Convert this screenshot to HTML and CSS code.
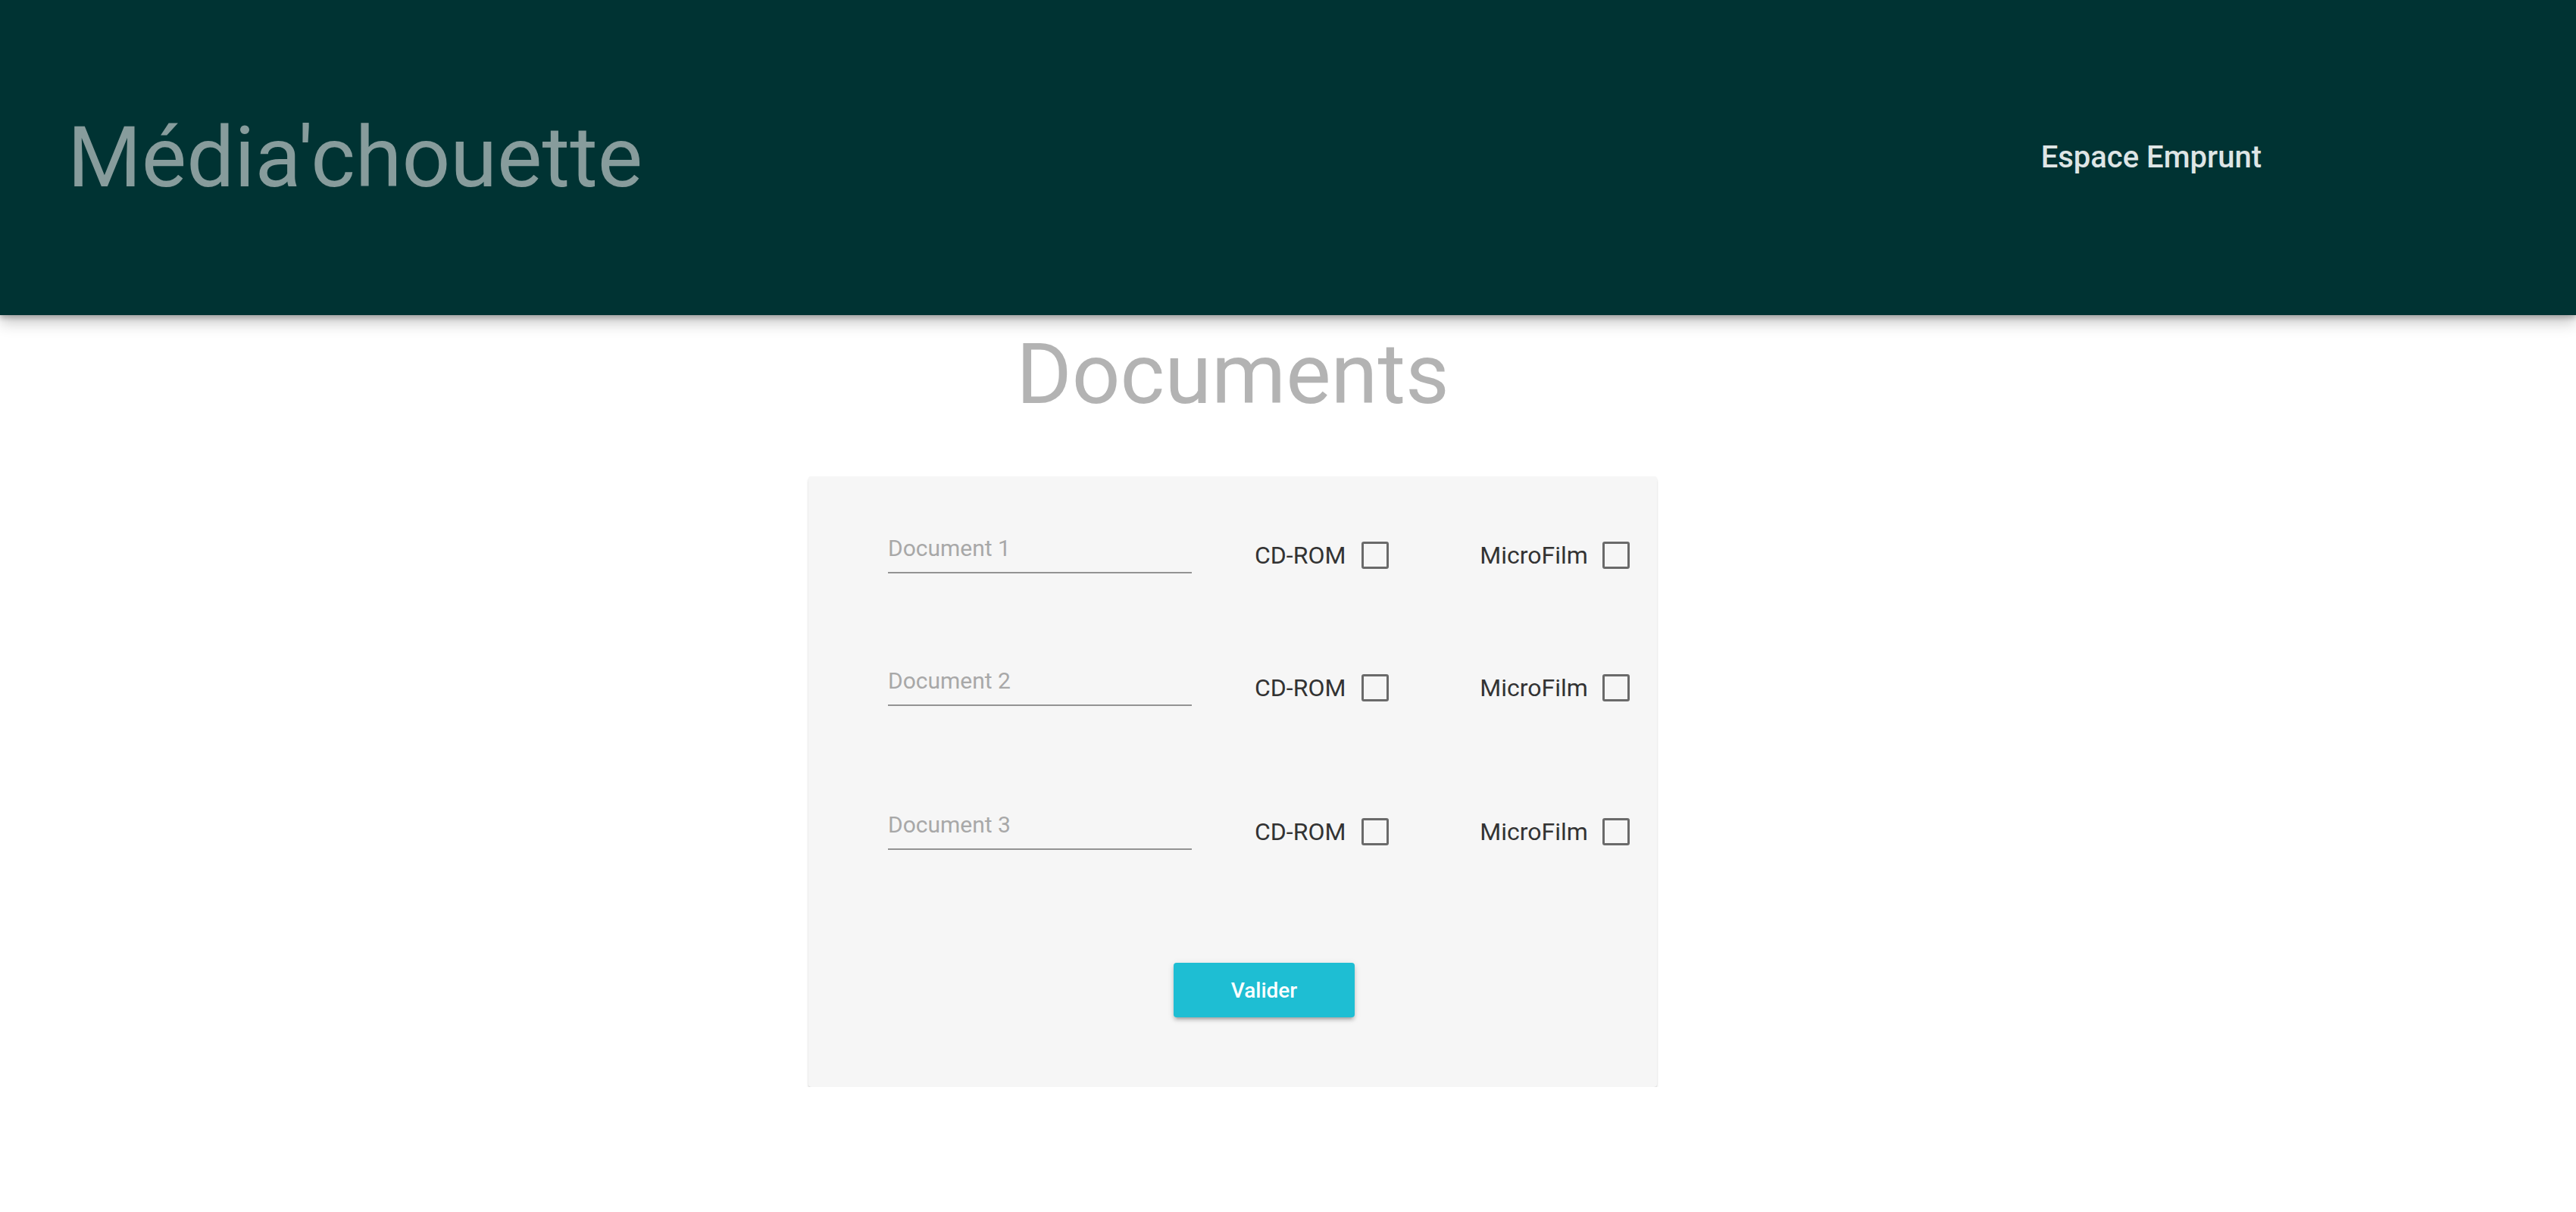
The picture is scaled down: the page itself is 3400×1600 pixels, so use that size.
FILE: index.html
```html
<!DOCTYPE html>
<html lang="fr">
<head>
<meta charset="utf-8">
<title>Média'chouette</title>
<link rel="stylesheet" href="styles.css">
</head>
<body>
<header class="topbar">
  <div class="brand">Média'chouette</div>
  <nav class="nav"><a class="nav-link" href="#">Espace Emprunt</a></nav>
</header>
<main class="page">
  <h1 class="page-title">Documents</h1>
  <form class="card">
    <div class="doc-row">
      <div class="field"><span class="field-placeholder">Document 1</span></div>
      <label class="choice choice-cd"><span class="choice-label">CD-ROM</span><span class="checkbox"></span></label>
      <label class="choice choice-mf"><span class="choice-label">MicroFilm</span><span class="checkbox"></span></label>
    </div>
    <div class="doc-row doc-row-2">
      <div class="field"><span class="field-placeholder">Document 2</span></div>
      <label class="choice choice-cd"><span class="choice-label">CD-ROM</span><span class="checkbox"></span></label>
      <label class="choice choice-mf"><span class="choice-label">MicroFilm</span><span class="checkbox"></span></label>
    </div>
    <div class="doc-row doc-row-3">
      <div class="field"><span class="field-placeholder">Document 3</span></div>
      <label class="choice choice-cd"><span class="choice-label">CD-ROM</span><span class="checkbox"></span></label>
      <label class="choice choice-mf"><span class="choice-label">MicroFilm</span><span class="checkbox"></span></label>
    </div>
    <div class="actions">
      <button type="button" class="btn">Valider</button>
    </div>
  </form>
</main>
</body>
</html>
```
FILE: styles.css
```css
* { box-sizing: border-box; }
html, body {
  margin: 0;
  padding: 0;
  background: #ffffff;
  font-family: Roboto, "Liberation Sans", Arial, sans-serif;
}
.topbar {
  position: relative;
  z-index: 1;
  height: 416px;
  background: #003333;
  display: flex;
  align-items: center;
  justify-content: space-between;
  padding: 0 415px 0 89px;
  box-shadow: 0 10px 18px rgba(0,0,0,0.22), 0 4px 6px rgba(0,0,0,0.2);
}
.brand {
  font-size: 112px;
  line-height: 1;
  color: #879c9c;
  font-weight: 400;
  white-space: nowrap;
}
.nav-link {
  font-size: 40px;
  line-height: 1;
  font-weight: 500;
  color: #dee5e5;
  text-decoration: none;
  white-space: nowrap;
}
.page {
  width: 1120px;
  margin-left: 1067px;
  display: flex;
  flex-direction: column;
}
.page-title {
  margin: 22px 0 79px;
  font-size: 112px;
  line-height: 1;
  font-weight: 400;
  color: #b3b3b3;
  text-align: center;
}
.card {
  margin: 0;
  background: #f6f6f6;
  border-radius: 4px;
  padding: 80px 38px 92px 105px;
  display: flex;
  flex-direction: column;
  box-shadow: 0 3px 3px rgba(0,0,0,0.16), 0 0 2px rgba(0,0,0,0.06);
}
.doc-row {
  display: flex;
  align-items: center;
  height: 48px;
}
.doc-row-2 { margin-top: 127px; }
.doc-row-3 { margin-top: 142px; }
.field {
  flex: 0 0 401px;
  width: 401px;
  font-size: 30px;
  line-height: 1;
  padding-bottom: 16px;
  border-bottom: 2px solid #939393;
  color: #a8a8a8;
  white-space: nowrap;
}
.choice {
  flex: 0 0 auto;
  display: flex;
  align-items: center;
  gap: 21px;
  font-size: 32px;
  line-height: 1;
  color: #333333;
  white-space: nowrap;
}
.choice-cd { margin-left: 83px; }
.choice-mf { margin-left: 120px; gap: 19px; }
.checkbox {
  display: block;
  flex: 0 0 36px;
  width: 36px;
  height: 36px;
  border: 3px solid #6a6a6a;
  border-radius: 3px;
}
.actions {
  display: flex;
  margin-top: 149px;
  padding-left: 377px;
}
.btn {
  width: 239px;
  height: 72px;
  border: none;
  border-radius: 4px;
  background: #1ebed3;
  color: #ffffff;
  font-family: Roboto, "Liberation Sans", Arial, sans-serif;
  font-size: 28px;
  font-weight: 500;
  box-shadow: 0 4px 4px rgba(0,0,0,0.14), 0 6px 2px -4px rgba(0,0,0,0.12), 0 2px 10px rgba(0,0,0,0.12);
}
```
